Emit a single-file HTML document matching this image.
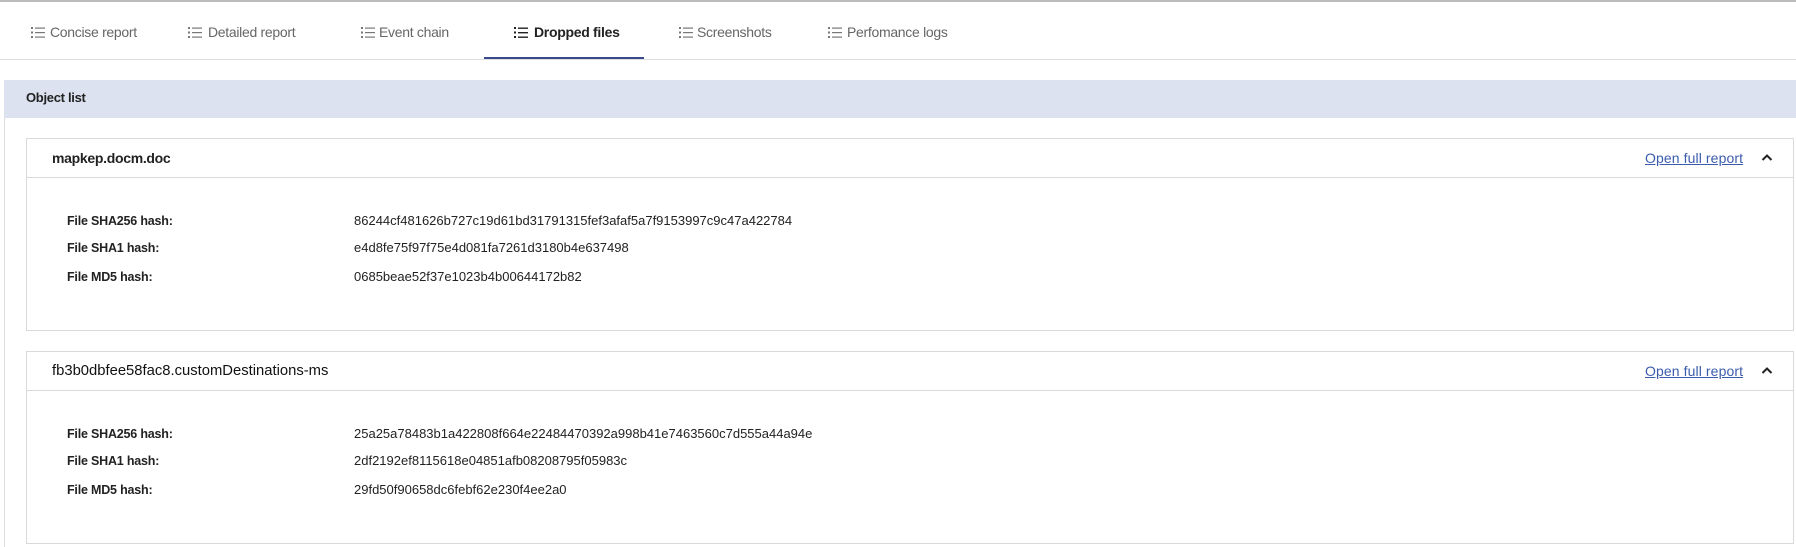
<!DOCTYPE html>
<html><head><style>
*{margin:0;padding:0;box-sizing:border-box}
body{width:1796px;height:547px;background:#fff;font-family:"Liberation Sans",sans-serif;position:relative;overflow:hidden;color:#222}
.a{position:absolute;white-space:nowrap}
.tab{position:absolute;top:24px;font-size:14px;color:#666;letter-spacing:-0.3px}
.tab.on{color:#222;font-weight:bold}
.ic{position:absolute;top:27px;width:14px;height:11px}
.card{position:absolute;left:26px;width:1768px;border:1px solid #d9d9d9;background:#fff}
.hd{height:39px;border-bottom:1px solid #d9d9d9;position:relative}
.tt{position:absolute;left:25px;top:11px;font-size:14px;font-weight:bold;color:#222;letter-spacing:-0.3px}
.lk{position:absolute;left:1618px;top:11px;font-size:14px;color:#3b5cad;text-decoration:underline;letter-spacing:0.1px}
.lb{position:absolute;left:40px;font-size:12.5px;font-weight:bold;color:#222;letter-spacing:-0.2px}
.vl{position:absolute;left:327px;font-size:13px;color:#222;letter-spacing:0}
</style></head><body>
<div class="a" style="left:0;top:0;width:1796px;height:2px;background:#bbb"></div>
<div class="a" style="left:0;top:59px;width:1796px;height:1px;background:#ddd"></div>
<div class="a" style="left:484px;top:57px;width:160px;height:2px;background:#3a4a8a"></div>

<svg class="ic" style="left:31px" viewBox="0 0 14 11"><g fill="#777"><rect x="0" y="0" width="2" height="2"/><rect x="0" y="4.5" width="2" height="2"/><rect x="0" y="9" width="2" height="2"/><rect x="4" y="0.5" width="10" height="1.2"/><rect x="4" y="5" width="10" height="1.2"/><rect x="4" y="9.5" width="10" height="1.2"/></g></svg>
<div class="tab" style="left:50px">Concise report</div>
<svg class="ic" style="left:188px" viewBox="0 0 14 11"><g fill="#777"><rect x="0" y="0" width="2" height="2"/><rect x="0" y="4.5" width="2" height="2"/><rect x="0" y="9" width="2" height="2"/><rect x="4" y="0.5" width="10" height="1.2"/><rect x="4" y="5" width="10" height="1.2"/><rect x="4" y="9.5" width="10" height="1.2"/></g></svg>
<div class="tab" style="left:208px">Detailed report</div>
<svg class="ic" style="left:361px" viewBox="0 0 14 11"><g fill="#777"><rect x="0" y="0" width="2" height="2"/><rect x="0" y="4.5" width="2" height="2"/><rect x="0" y="9" width="2" height="2"/><rect x="4" y="0.5" width="10" height="1.2"/><rect x="4" y="5" width="10" height="1.2"/><rect x="4" y="9.5" width="10" height="1.2"/></g></svg>
<div class="tab" style="left:379px">Event chain</div>
<svg class="ic" style="left:514px" viewBox="0 0 14 11"><g fill="#222"><rect x="0" y="0" width="2" height="2"/><rect x="0" y="4.5" width="2" height="2"/><rect x="0" y="9" width="2" height="2"/><rect x="4" y="0.5" width="10" height="1.4"/><rect x="4" y="5" width="10" height="1.4"/><rect x="4" y="9.5" width="10" height="1.4"/></g></svg>
<div class="tab on" style="left:534px">Dropped files</div>
<svg class="ic" style="left:679px" viewBox="0 0 14 11"><g fill="#777"><rect x="0" y="0" width="2" height="2"/><rect x="0" y="4.5" width="2" height="2"/><rect x="0" y="9" width="2" height="2"/><rect x="4" y="0.5" width="10" height="1.2"/><rect x="4" y="5" width="10" height="1.2"/><rect x="4" y="9.5" width="10" height="1.2"/></g></svg>
<div class="tab" style="left:697px">Screenshots</div>
<svg class="ic" style="left:828px" viewBox="0 0 14 11"><g fill="#777"><rect x="0" y="0" width="2" height="2"/><rect x="0" y="4.5" width="2" height="2"/><rect x="0" y="9" width="2" height="2"/><rect x="4" y="0.5" width="10" height="1.2"/><rect x="4" y="5" width="10" height="1.2"/><rect x="4" y="9.5" width="10" height="1.2"/></g></svg>
<div class="tab" style="left:847px">Perfomance logs</div>

<div class="a" style="left:4px;top:80px;width:1792px;height:467px;border-left:1px solid #ddd"></div>
<div class="a" style="left:4px;top:80px;width:1792px;height:38px;background:#dce2f0"></div>
<div class="a" style="left:26px;top:90px;font-size:13px;font-weight:bold;letter-spacing:-0.3px">Object list</div>

<div class="card" style="top:138px;height:193px">
 <div class="hd"><div class="tt">mapkep.docm.doc</div><div class="lk">Open full report</div>
 <svg class="a" style="left:1734px;top:14px" width="12" height="9" viewBox="0 0 12 9"><path d="M1.5 7 L6 2.5 L10.5 7" fill="none" stroke="#222" stroke-width="2"/></svg></div>
 <div class="lb" style="top:75px">File SHA256 hash:</div><div class="vl" style="top:74px">86244cf481626b727c19d61bd31791315fef3afaf5a7f9153997c9c47a422784</div>
 <div class="lb" style="top:102px">File SHA1 hash:</div><div class="vl" style="top:101px">e4d8fe75f97f75e4d081fa7261d3180b4e637498</div>
 <div class="lb" style="top:131px">File MD5 hash:</div><div class="vl" style="top:130px">0685beae52f37e1023b4b00644172b82</div>
</div>

<div class="card" style="top:351px;height:193px">
 <div class="hd"><div class="tt" style="font-weight:normal;color:#111;font-size:14.8px;letter-spacing:0">fb3b0dbfee58fac8.customDestinations-ms</div><div class="lk">Open full report</div>
 <svg class="a" style="left:1734px;top:14px" width="12" height="9" viewBox="0 0 12 9"><path d="M1.5 7 L6 2.5 L10.5 7" fill="none" stroke="#222" stroke-width="2"/></svg></div>
 <div class="lb" style="top:75px">File SHA256 hash:</div><div class="vl" style="top:74px">25a25a78483b1a422808f664e22484470392a998b41e7463560c7d555a44a94e</div>
 <div class="lb" style="top:102px">File SHA1 hash:</div><div class="vl" style="top:101px">2df2192ef8115618e04851afb08208795f05983c</div>
 <div class="lb" style="top:131px">File MD5 hash:</div><div class="vl" style="top:130px">29fd50f90658dc6febf62e230f4ee2a0</div>
</div>
</body></html>
